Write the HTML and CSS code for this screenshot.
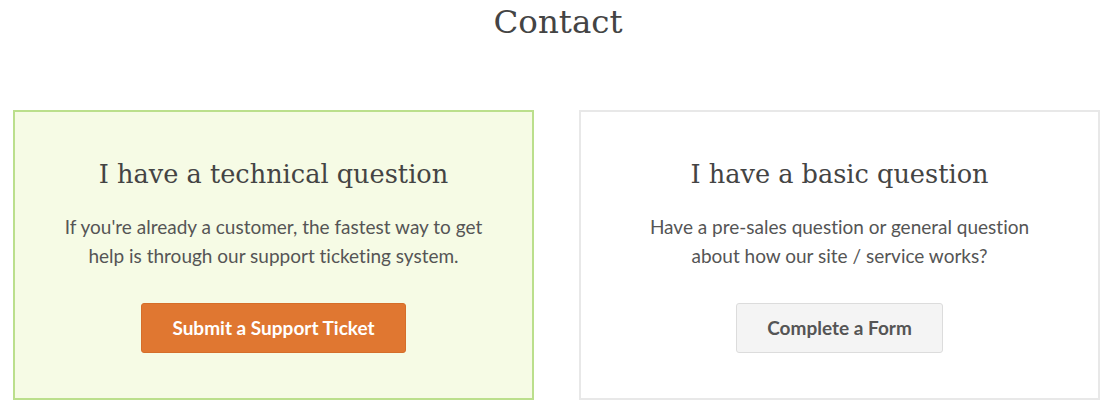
FILE: index.html
```html
<!DOCTYPE html>
<html lang="en">
<head>
  <meta charset="UTF-8">
  <meta name="viewport" content="width=device-width, initial-scale=1.0">
  <title>Contact</title>
  <link rel="stylesheet" href="styles.css">
</head>
<body>
  <h1 class="page-title">Contact</h1>

  <div class="options">
    <div class="option option-tech">
      <h2>I have a technical question</h2>
      <p>If you're already a customer, the fastest way to get help is through our support ticketing system.</p>
      <a class="btn btn-orange" href="#">Submit a Support Ticket</a>
    </div>

    <div class="option option-basic">
      <h2>I have a basic question</h2>
      <p>Have a pre-sales question or general question about how our site / service works?</p>
      <a class="btn btn-grey" href="#">Complete a Form</a>
    </div>
  </div>
</body>
</html>
```

FILE: styles.css
```css
* { box-sizing: border-box; }
body {
  font-family: Lato, 'Open Sans', sans-serif;
  font-variant-ligatures: none;
  background: #fff;
  color: #555;
  margin: 0;
  padding: 0;
}
.page-title {
  font-family: 'DejaVu Serif', serif;
  font-weight: normal;
  font-size: 32.5px;
  line-height: 44px;
  color: #444;
  text-align: center;
  margin: 0;
}
.options {
  display: grid;
  grid-template-columns: 521px 521px;
  gap: 45px;
  padding: 66px 0 0 13px;
}
.option {
  border: 2px solid #e8e8e8;
  padding: 44px 20px 45px;
  text-align: center;
}
.option-tech {
  background: #f6fbe5;
  border-color: #bbdf8c;
}
.option h2 {
  font-family: 'DejaVu Serif', serif;
  font-weight: normal;
  font-size: 25.6px;
  line-height: 36px;
  color: #444;
  margin: 0 0 20px;
}
.option p {
  font-size: 19px;
  line-height: 29px;
  max-width: 422px;
  margin: 0 auto 33px;
}
.btn {
  display: inline-block;
  height: 50px;
  line-height: 48px;
  font-size: 19px;
  font-weight: bold;
  text-decoration: none;
  border-radius: 3px;
  border: 1px solid transparent;
  padding: 0 30px;
}
.btn-orange {
  background: #e07731;
  border-color: #d56e2a;
  color: #fff;
}
.btn-grey {
  background: #f4f4f4;
  border-color: #dcdcdc;
  color: #555;
}
```
